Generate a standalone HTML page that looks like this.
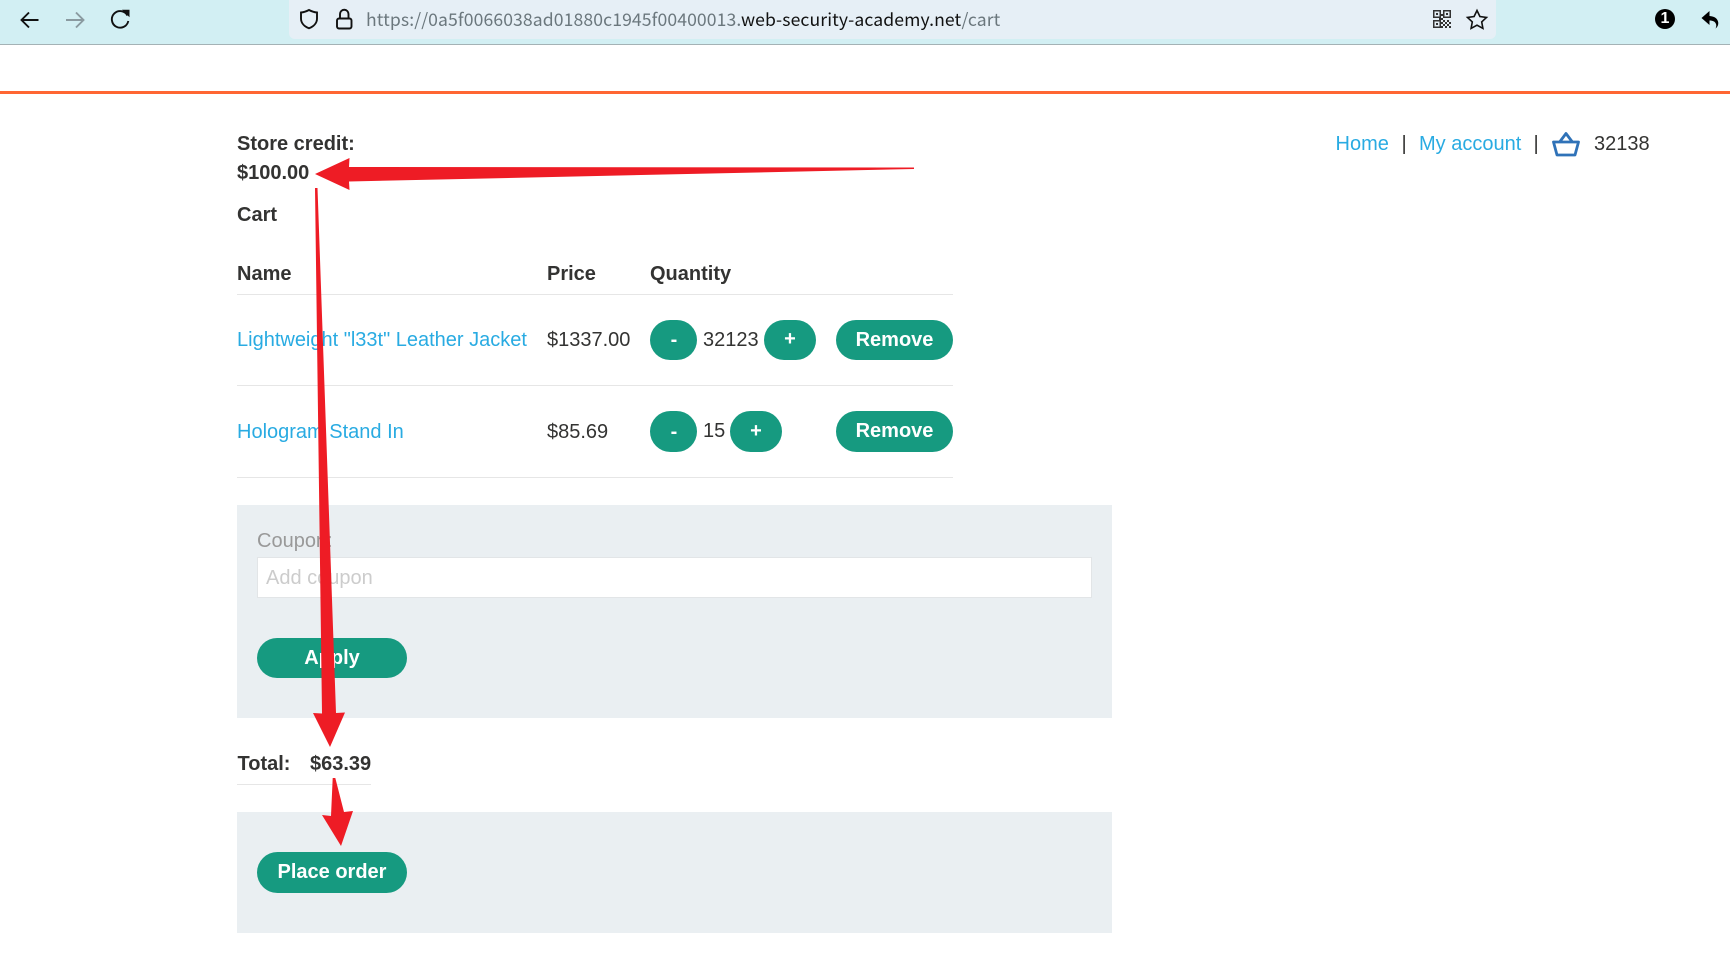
<!DOCTYPE html>
<html><head><meta charset="utf-8">
<style>
html,body{margin:0;padding:0;width:1730px;height:958px;overflow:hidden;background:#fff;font-family:"Liberation Sans",Arial,sans-serif;color:#333332}
.t{position:absolute;white-space:nowrap;line-height:24px;height:24px;font-size:20px}
.b{font-weight:bold}
.l{color:#29abe2}
.r{position:absolute;background:#e6e6e6;height:1px}
.btn{position:absolute;background:#169a80;color:#fff;font-weight:bold;font-size:20px;text-align:center;border-radius:21px}
.p{position:absolute;background:#eaeff2}
svg{position:absolute;overflow:visible}
</style></head><body>
<div style="position:absolute;left:0;top:0;width:1730px;height:44px;background:#d2eff3;border-bottom:1px solid #a4b2b5"></div>
<div style="position:absolute;left:289px;top:0;width:1207px;height:39px;background:#e6eff6;border-radius:0 0 6px 6px"></div>
<div class="t" style="left:366px;top:8px;font-family:'Noto Sans CJK SC','Liberation Sans',sans-serif;font-size:17.6px;color:#6b777d;letter-spacing:.1px">https://0a5f0066038ad01880c1945f00400013.<span style="color:#111">web-security-academy.net</span>/cart</div>

<svg style="left:0;top:0" width="1730" height="44" fill="none" stroke="#111" stroke-width="1.9">
<path d="M38.500 20H22M29 12.500 21.500 20l7.500 7.500"/>
<path stroke="#8a9aa0" d="M66 20H83M76 12.500 83.500 20 76 27.500"/>
<path d="M127.500 15.500A8.300 8.300 0 1 0 128.300 21"/><path fill="#111" stroke="none" d="M122 9.800h7.500v7.500z"/>
<path d="M309 10c3 1.600 5.500 2.300 8 2.500v6c0 4.500-3.300 8-8 9.800-4.700-1.800-8-5.300-8-9.800v-6c2.500-.2 5-.9 8-2.500z"/>
<rect x="337" y="18.500" width="14.500" height="10" rx="2"/><path d="M340 18.500v-4.500a4.200 4.200 0 0 1 8.500 0v4.500"/>
<path stroke-width="1.600" d="M1477 10.500l2.900 6 6.600.9-4.800 4.500 1.200 6.500-5.900-3.200-5.900 3.200 1.200-6.500-4.800-4.500 6.600-.9z"/>
<g stroke="none" fill="#333"><path fill-rule="evenodd" d="M1433 10h8v8h-8zm1.500 1.500v5h5v-5zM1443 10h8v8h-8zm1.500 1.500v5h5v-5zM1433 20h8v8h-8zm1.500 1.500v5h5v-5z"/><rect x="1436" y="13" width="2" height="2"/><rect x="1446" y="13" width="2" height="2"/><rect x="1436" y="23" width="2" height="2"/><rect x="1443" y="20" width="2" height="2"/><rect x="1447" y="20" width="2" height="2"/><rect x="1445" y="22" width="2" height="2"/><rect x="1449" y="22" width="2" height="2"/><rect x="1443" y="24" width="2" height="2"/><rect x="1447" y="24" width="2" height="2"/><rect x="1445" y="26" width="2" height="2"/><rect x="1449" y="26" width="2" height="2"/><rect x="1441" y="14" width="2" height="2"/><rect x="1441" y="18" width="2" height="2"/><rect x="1439" y="18" width="2" height="2"/><rect x="1441" y="22" width="2" height="2"/><rect x="1441" y="26" width="2" height="2"/></g>
<circle cx="1665" cy="19" r="10" fill="#000" stroke="none"/>
<path stroke="none" fill="#000" d="M1709.500 11l-8 7 8 7v-4.500c3.500 0 5.500 1 6.500 3.500.5 1.300.3 3-.5 4.500 2.300-1.500 3-4 2.700-6.200-.5-3.600-3.700-6-8.700-6.300z"/>
</svg>
<div class="t" style="left:1655px;top:7px;width:20px;text-align:center;color:#fff;font-weight:bold;font-size:16px">1</div>

<div style="position:absolute;left:0;top:91px;width:1730px;height:3px;background:#ff6633"></div>

<div class="t b" style="left:237px;top:132px">Store credit:</div>
<div class="t b" style="left:237px;top:161px">$100.00</div>
<div class="t b" style="left:237px;top:203px">Cart</div>

<div class="t l" style="left:1335.500px;top:132px">Home</div>
<div class="t" style="left:1401.500px;top:132px">|</div>
<div class="t l" style="left:1419px;top:132px">My account</div>
<div class="t" style="left:1533.500px;top:132px">|</div>
<svg style="left:0;top:0" width="1730" height="958" fill="none" stroke="#2f72b8" stroke-width="2.800" stroke-linejoin="round"><path d="M1553.500 142h25l-3.500 13h-18zM1560 141.500l6-8 6 8"/></svg>
<div class="t" style="left:1594px;top:132px">32138</div>

<div class="t b" style="left:237px;top:262px">Name</div>
<div class="t b" style="left:547px;top:262px">Price</div>
<div class="t b" style="left:650px;top:262px">Quantity</div>
<div class="r" style="left:237px;top:294px;width:716px"></div>

<div class="t l" style="left:237px;top:328px">Lightweight "l33t" Leather Jacket</div>
<div class="t" style="left:547px;top:328px">$1337.00</div>
<div class="btn" style="left:650px;top:320px;width:47px;height:40px;line-height:41px;text-indent:1px">-</div>
<div class="t" style="left:703px;top:328px">32123</div>
<div class="btn" style="left:764px;top:320px;width:52px;height:40px;line-height:39px">+</div>
<div class="btn" style="left:836px;top:320px;width:117px;height:40px;line-height:41px">Remove</div>
<div class="r" style="left:237px;top:385px;width:716px"></div>

<div class="t l" style="left:237px;top:420px">Hologram Stand In</div>
<div class="t" style="left:547px;top:420px">$85.69</div>
<div class="btn" style="left:650px;top:411px;width:47px;height:41px;line-height:42px;text-indent:1px">-</div>
<div class="t" style="left:703px;top:419px">15</div>
<div class="btn" style="left:730px;top:411px;width:52px;height:41px;line-height:40px">+</div>
<div class="btn" style="left:836px;top:411px;width:117px;height:41px;line-height:41px">Remove</div>
<div class="r" style="left:237px;top:477px;width:716px"></div>

<div class="p" style="left:237px;top:505px;width:875px;height:213px"></div>
<div class="t" style="left:257px;top:529px;color:#999">Coupon:</div>
<div style="position:absolute;left:257px;top:557px;width:833px;height:39px;background:#fff;border:1px solid #e2e5e7"></div>
<div class="t" style="left:266px;top:566px;color:#ccc">Add coupon</div>
<div class="btn" style="left:257px;top:638px;width:150px;height:40px;line-height:40px">Apply</div>

<div class="t b" style="left:237.500px;top:752px">Total:</div>
<div class="t b" style="left:310px;top:752px">$63.39</div>
<div class="r" style="left:237px;top:784px;width:134px"></div>

<div class="p" style="left:237px;top:812px;width:875px;height:121px"></div>
<div class="btn" style="left:257px;top:852px;width:150px;height:41px;line-height:41px">Place order</div>

<svg style="left:0;top:0" width="1730" height="958" fill="#ee1c25">
<path d="M914 167.500V169L349 181.500 349.500 190 315 174 349.500 158 349 167z"/>
<path d="M315 188h2.500L336 713l9-.5L330 747 313 713l9 .5z"/>
<path d="M332.700 778h2.600L344 812l9-1L341 846 322 815l9 1z"/>
</svg>
</body></html>
